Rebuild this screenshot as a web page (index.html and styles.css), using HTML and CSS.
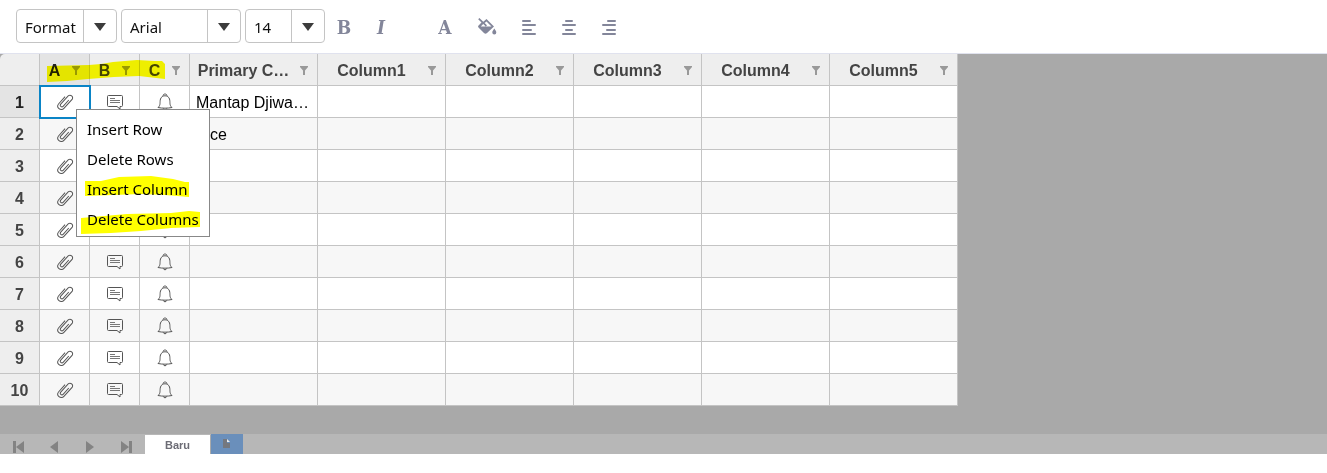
FILE: index.html
```html
<!DOCTYPE html>
<html lang="en">
<head>
<meta charset="utf-8">
<title>Baru</title>
<link rel="stylesheet" href="styles.css">
</head>
<body>
<svg class="sprite" aria-hidden="true">
  <symbol id="clip" viewBox="0 0 18 18"><path transform="rotate(42 9 9)" d="M5.500 5V14.500a3.500 3.500 0 0 0 7 0V2a2.700 2.700 0 0 0-5.200 0V13.500a1.600 1.600 0 0 0 3.200 0V5"/></symbol>
  <symbol id="note" viewBox="0 0 18 18"><path d="M2.500 2.500h13q1 0 1 1v9q0 1-1 1h-1.500v2.500l-3-2.500h-8.500q-1 0-1-1v-9q0-1 1-1z"/><path class="lines" d="M4 5.500h5M4 7.500h10M4 9.500h10"/></symbol>
  <symbol id="bell" viewBox="0 0 18 18"><path d="M7 2.800c0-2.400 4-2.400 4 0M2 14.500c3-2.500 1.500-5 2.500-8.500 1.200-4.300 7.800-4.300 9 0 1 3.500-.5 6 2.500 8.500-4 .9-10 .9-14 0zM7.500 15.500c0 1.700 3 1.700 3 0"/></symbol>
  <symbol id="funnel" viewBox="0 0 8 9"><path d="M0 0h8v1L5 4.500V9H3V4.500L0 1z"/></symbol>
</svg>

<div class="toolbar" role="toolbar" aria-label="Formatting">
  <div class="pick pick-format"><select aria-label="Format"><option>Format</option></select><span class="arrow"></span></div>
  <div class="pick pick-font"><select aria-label="Font"><option>Arial</option></select><span class="arrow"></span></div>
  <div class="pick pick-size"><select aria-label="Font size"><option>14</option></select><span class="arrow"></span></div>
  <div class="text-tools">
    <button class="tool letter" type="button" aria-label="Bold">B</button>
    <button class="tool letter italic" type="button" aria-label="Italic">I</button>
  </div>
  <div class="color-tools">
    <button class="tool letter" type="button" aria-label="Text color">A</button>
    <button class="tool" type="button" aria-label="Fill color"><svg width="20" height="17" viewBox="0 0 20 17"><path class="fill" fill-rule="evenodd" d="M9.500 1 17 8.500 10 15q-1.500 1.500-3 0L1.500 9.500q-1-1 0-2L4.500 4.600 1.200 1.300 2.400 0 6.300 3.700zM9.500 3.500 7.600 5 10 7.300 8.800 8.500 6.200 6 3.800 8.500h10.700z"/><path class="fill" d="M17.300 10.500c1.200 1.800 2 2.800 2 4a2 2 0 0 1-4 0c0-1.200.8-2.200 2-4z"/></svg></button>
  </div>
  <div class="align-tools">
    <button class="tool" type="button" aria-label="Align left"><svg width="16" height="16" viewBox="0 0 16 16"><path class="line" d="M2 2h7M2 6h12M2 11h8M2 15h12"/></svg></button>
    <button class="tool" type="button" aria-label="Align center"><svg width="16" height="16" viewBox="0 0 16 16"><path class="line" d="M5 2h6M2 6h12M5 11h6M2 15h12"/></svg></button>
    <button class="tool" type="button" aria-label="Align right"><svg width="16" height="16" viewBox="0 0 16 16"><path class="line" d="M7 2h7M2 6h12M6 11h8M2 15h12"/></svg></button>
  </div>
</div>

<main class="sheet">
  <table class="grid">
    <colgroup><col class="c-num"><col class="c-icon"><col class="c-icon"><col class="c-icon"><col class="c-data"><col class="c-data"><col class="c-data"><col class="c-data"><col class="c-data"><col class="c-data"></colgroup>
    <thead>
      <tr>
        <td class="corner"></td>
        <th class="active" scope="col"><div class="head"><span>A</span><svg class="funnel"><use href="#funnel"/></svg></div></th>
        <th scope="col"><div class="head"><span>B</span><svg class="funnel"><use href="#funnel"/></svg></div></th>
        <th scope="col"><div class="head"><span>C</span><svg class="funnel"><use href="#funnel"/></svg></div></th>
        <th scope="col"><div class="head"><span>Primary C…</span><svg class="funnel"><use href="#funnel"/></svg></div></th>
        <th scope="col"><div class="head"><span>Column1</span><svg class="funnel"><use href="#funnel"/></svg></div></th>
        <th scope="col"><div class="head"><span>Column2</span><svg class="funnel"><use href="#funnel"/></svg></div></th>
        <th scope="col"><div class="head"><span>Column3</span><svg class="funnel"><use href="#funnel"/></svg></div></th>
        <th scope="col"><div class="head"><span>Column4</span><svg class="funnel"><use href="#funnel"/></svg></div></th>
        <th scope="col"><div class="head"><span>Column5</span><svg class="funnel"><use href="#funnel"/></svg></div></th>
      </tr>
    </thead>
    <tbody>
      <tr><th class="active" scope="row">1</th><td class="mark selected"><svg><use href="#clip"/></svg></td><td class="mark"><svg><use href="#note"/></svg></td><td class="mark"><svg><use href="#bell"/></svg></td><td>Mantap Djiwa…</td><td></td><td></td><td></td><td></td><td></td></tr>
      <tr><th scope="row">2</th><td class="mark"><svg><use href="#clip"/></svg></td><td class="mark"><svg><use href="#note"/></svg></td><td class="mark"><svg><use href="#bell"/></svg></td><td>Vice</td><td></td><td></td><td></td><td></td><td></td></tr>
      <tr><th scope="row">3</th><td class="mark"><svg><use href="#clip"/></svg></td><td class="mark"><svg><use href="#note"/></svg></td><td class="mark"><svg><use href="#bell"/></svg></td><td></td><td></td><td></td><td></td><td></td><td></td></tr>
      <tr><th scope="row">4</th><td class="mark"><svg><use href="#clip"/></svg></td><td class="mark"><svg><use href="#note"/></svg></td><td class="mark"><svg><use href="#bell"/></svg></td><td></td><td></td><td></td><td></td><td></td><td></td></tr>
      <tr><th scope="row">5</th><td class="mark"><svg><use href="#clip"/></svg></td><td class="mark"><svg><use href="#note"/></svg></td><td class="mark"><svg><use href="#bell"/></svg></td><td></td><td></td><td></td><td></td><td></td><td></td></tr>
      <tr><th scope="row">6</th><td class="mark"><svg><use href="#clip"/></svg></td><td class="mark"><svg><use href="#note"/></svg></td><td class="mark"><svg><use href="#bell"/></svg></td><td></td><td></td><td></td><td></td><td></td><td></td></tr>
      <tr><th scope="row">7</th><td class="mark"><svg><use href="#clip"/></svg></td><td class="mark"><svg><use href="#note"/></svg></td><td class="mark"><svg><use href="#bell"/></svg></td><td></td><td></td><td></td><td></td><td></td><td></td></tr>
      <tr><th scope="row">8</th><td class="mark"><svg><use href="#clip"/></svg></td><td class="mark"><svg><use href="#note"/></svg></td><td class="mark"><svg><use href="#bell"/></svg></td><td></td><td></td><td></td><td></td><td></td><td></td></tr>
      <tr><th scope="row">9</th><td class="mark"><svg><use href="#clip"/></svg></td><td class="mark"><svg><use href="#note"/></svg></td><td class="mark"><svg><use href="#bell"/></svg></td><td></td><td></td><td></td><td></td><td></td><td></td></tr>
      <tr><th scope="row">10</th><td class="mark"><svg><use href="#clip"/></svg></td><td class="mark"><svg><use href="#note"/></svg></td><td class="mark"><svg><use href="#bell"/></svg></td><td></td><td></td><td></td><td></td><td></td><td></td></tr>
    </tbody>
  </table>

  <svg class="marker" width="120" height="24" viewBox="0 0 120 24" aria-hidden="true"><path d="M0 6 42 5 54 4 66 2 90 0 108 1h7l3 3v15L92 16 67 17 41 19 20 21 0 22z"/></svg>

  <div class="menu" role="menu">
    <svg class="menu-marker" width="120" height="60" viewBox="0 0 120 60" aria-hidden="true"><path d="M4 6 20 6 38 2 70 1 92 4 104 7h4v15L84 20 60 19 4 21zM0 43 46 39 90 38 108 36l11 1v15L90 53 60 56 30 58 0 59z"/></svg>
    <button type="button" role="menuitem">Insert Row</button>
    <button type="button" role="menuitem">Delete Rows</button>
    <button type="button" role="menuitem">Insert Column</button>
    <button type="button" role="menuitem">Delete Columns</button>
  </div>
</main>

<footer class="tabs">
  <nav class="pager" aria-label="Sheets">
    <button type="button" aria-label="First sheet"><svg viewBox="0 0 12 12"><path d="M0 0h3v12H0zM11 0v12L3 6z"/></svg></button>
    <button type="button" aria-label="Previous sheet"><svg viewBox="0 0 12 12"><path d="M9 0v12L1 6z"/></svg></button>
    <button type="button" aria-label="Next sheet"><svg viewBox="0 0 12 12"><path d="M1 0v12l8-6z"/></svg></button>
    <button type="button" aria-label="Last sheet"><svg viewBox="0 0 12 12"><path d="M8 0h3v12H8zM0 0v12l8-6z"/></svg></button>
  </nav>
  <button class="tab" type="button">Baru</button>
  <button class="add" type="button" aria-label="Add sheet"><svg width="8" height="10" viewBox="0 0 8 10"><path class="page" d="M0 0h4v4h3v5H0z"/><path class="fold" d="M4 0l3 3H4z"/></svg></button>
</footer>
</body>
</html>
```

FILE: styles.css
```css
* { box-sizing: border-box; }

body {
  margin: 0;
  background: #fff;
  color: #000;
  font-family: "Liberation Sans", Arial, sans-serif;
  font-size: 16px;
}

button {
  margin: 0;
  padding: 0;
  border: 0;
  background: none;
  color: inherit;
  font: inherit;
}

.sprite {
  display: none;
}

/* Toolbar */
.toolbar {
  display: flex;
  align-items: center;
  height: 54px;
  padding: 0 16px 1px;
  border-bottom: 1px solid #e0e2ee;
}

.pick {
  display: grid;
  grid-template-columns: 1fr 33px;
  height: 34px;
  margin-right: 4px;
  border: 1px solid #c4c4c4;
  border-radius: 4px;
}

.pick-format { width: 101px; }
.pick-font { width: 120px; }
.pick-size { width: 80px; }

.pick select {
  grid-area: 1 / 1 / 2 / 3;
  appearance: none;
  padding: 2px 0 0 8px;
  border: 0;
  background: none;
  color: #111;
  font-family: "Noto Sans", "Open Sans", sans-serif;
  font-size: 15px;
}

.arrow {
  grid-area: 1 / 2 / 2 / 3;
  display: flex;
  align-items: center;
  justify-content: center;
  padding-top: 2px;
  border-left: 1px solid #c4c4c4;
  pointer-events: none;
}

.arrow::before {
  content: "";
  border: 6px solid transparent;
  border-top: 8px solid #3c3c3c;
  border-bottom: 0;
}

.tool {
  display: flex;
  align-items: center;
  justify-content: center;
  width: 40px;
  height: 34px;
  padding-top: 1px;
  color: #83869a;
}

.letter {
  font-family: "DejaVu Serif Condensed", "DejaVu Serif", serif;
  font-size: 19px;
  font-weight: bold;
  line-height: 20px;
}

.italic {
  width: 34px;
  font-style: italic;
}

.fill {
  fill: #83869a;
}

.line {
  fill: none;
  stroke: #83869a;
  stroke-width: 2;
  stroke-linecap: round;
}

.text-tools,
.color-tools,
.align-tools {
  display: flex;
}

.text-tools { margin-right: 27px; margin-left: -5px; }
.color-tools { gap: 2px; margin-right: 2px; }

/* Grid */
.sheet {
  position: relative;
  padding-bottom: 28px;
  background: #a9a9a9;
}

.grid {
  table-layout: fixed;
  width: 958px;
  border-spacing: 0;
}

.c-num { width: 40px; }
.c-icon { width: 50px; }
.c-data { width: 128px; }

.grid th,
.grid td {
  height: 32px;
  padding: 2px 6px 0;
  border: solid #c4c4c4;
  border-width: 0 1px 1px 0;
  background: #fff;
  line-height: 20px;
  white-space: nowrap;
}

.grid th,
.grid .corner {
  background: #eee;
  color: #444;
}

.grid thead th {
  padding: 2px 9px 0 6px;
}

.grid tbody tr:nth-child(even) td {
  background: #f7f7f7;
}

.grid tbody th {
  padding: 2px 0 0;
}

.grid .active {
  background: #e4e4e4;
  color: #222;
}

.grid .corner {
  border-top-left-radius: 5px;
}

.head {
  display: flex;
  align-items: center;
  gap: 9px;
}

.head span {
  flex: 1;
  text-align: center;
}

.head .funnel {
  flex: none;
  width: 8px;
  height: 9px;
  fill: #999;
}

.grid .mark {
  padding: 0;
}

.mark svg {
  display: block;
  width: 18px;
  height: 18px;
  margin: 0 auto;
  overflow: visible;
  fill: none;
  stroke: #555;
  stroke-width: 1;
}

.lines {
  stroke: #777;
}

.grid .selected {
  position: relative;
  outline: 2px solid #0a84c6;
  outline-offset: -1px;
}

/* Highlighter strokes laid over the header row */
.marker {
  position: absolute;
  top: 6px;
  left: 47px;
  fill: #ff0;
  mix-blend-mode: multiply;
}

/* Context menu */
.menu {
  position: absolute;
  top: 55px;
  left: 76px;
  display: flex;
  flex-direction: column;
  width: 134px;
  padding: 4px 0 2px;
  border: 1px solid #888;
  background: #fff;
}

.menu button {
  position: relative;
  height: 30px;
  padding-left: 10px;
  font-family: "Noto Sans", "Open Sans", sans-serif;
  font-size: 15px;
  line-height: 30px;
  text-align: left;
  white-space: nowrap;
}

.menu-marker {
  position: absolute;
  top: 65px;
  left: 4px;
  fill: #ff0;
}

/* Sheet tabs */
.tabs {
  display: flex;
  height: 20px;
  background: #b7b7b7;
}

.pager {
  display: flex;
  align-items: center;
  gap: 24px;
  padding: 6px 12px 0 13px;
}

.pager svg {
  display: block;
  width: 12px;
  height: 12px;
  fill: #838383;
}

.tab {
  width: 66px;
  margin-top: 1px;
  border-right: 1px solid #aaa;
  background: #fff;
  color: #6c6c75;
  font-size: 11px;
  font-weight: bold;
}

.add {
  display: flex;
  align-items: center;
  justify-content: center;
  width: 32px;
  background: #6a8fbb;
}

.page { fill: #75787f; }
.fold { fill: #eee; }
```
